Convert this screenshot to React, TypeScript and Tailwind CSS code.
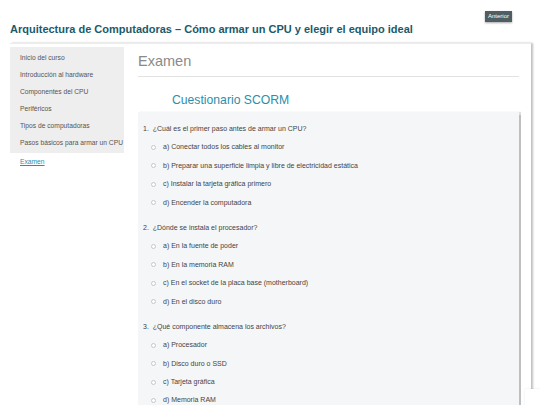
import React from "react";

const nav = [
  "Inicio del curso",
  "Introducción al hardware",
  "Componentes del CPU",
  "Periféricos",
  "Tipos de computadoras",
  "Pasos básicos para armar un CPU",
];

const questions = [
  {
    q: "1.  ¿Cuál es el primer paso antes de armar un CPU?",
    o: [
      "a) Conectar todos los cables al monitor",
      "b) Preparar una superficie limpia y libre de electricidad estática",
      "c) Instalar la tarjeta gráfica primero",
      "d) Encender la computadora",
    ],
  },
  {
    q: "2.  ¿Dónde se instala el procesador?",
    o: [
      "a) En la fuente de poder",
      "b) En la memoria RAM",
      "c) En el socket de la placa base (motherboard)",
      "d) En el disco duro",
    ],
  },
  {
    q: "3.  ¿Qué componente almacena los archivos?",
    o: ["a) Procesador", "b) Disco duro o SSD", "c) Tarjeta gráfica", "d) Memoria RAM"],
  },
];

export default function App() {
  return (
    <div
      className="relative w-[540px] h-[405px] overflow-hidden bg-white"
      style={{ fontFamily: '"Liberation Sans", Arial, sans-serif' }}
    >
      <div className="flex justify-end pt-[11px] pr-[28px]">
        <button className="h-[11px] px-[3px] bg-[#4e5e62] text-white text-[6px] leading-[11px] shadow-[0_1px_2px_rgba(0,0,0,0.35)]">
          Anterior
        </button>
      </div>
      <h1 className="pl-[10px] text-[11px] font-bold leading-[14px] text-[#1b5a6b]">
        Arquitectura de Computadoras – Cómo armar un CPU y elegir el equipo ideal
      </h1>
      <div className="ml-[10px] mt-[7px] w-[521px] h-[400px] bg-white border-t border-[#ececec] shadow-[2px_0_2px_rgba(0,0,0,0.25)] flex pt-[3px]">
        <div className="w-[114px] shrink-0">
          <div className="bg-[#eeeeee] pt-[2px] pb-[2px]">
            {nav.map((n) => (
              <div key={n} className="h-[17px] pl-[10px] text-[6.7px] leading-[17px] text-[#555555] whitespace-nowrap">
                {n}
              </div>
            ))}
          </div>
          <div className="h-[17px] pl-[10px] text-[6.7px] leading-[17px] text-[#2b8fab] underline">
            Examen
          </div>
        </div>
        <div className="flex-1 pl-[14px] pr-[12px]">
          <div className="text-[14.5px] leading-[20px] text-[#8a8a8a] mt-[4px]">Examen</div>
          <div className="mt-[5px] h-px bg-[#e2e2e2]"></div>
          <div className="pl-[34px] mt-[15px] text-[12.2px] leading-[16px] text-[#2b8fab]">
            Cuestionario SCORM
          </div>
          <div className="mt-[4px] bg-[#f4f6f8] shadow-[1.5px_0_1px_rgba(0,0,0,0.25)] pt-[8px] pl-[5px] h-[300px]">
            {questions.map((g, i) => (
              <div key={i} className={i > 0 ? "mt-[7px]" : ""}>
                <div className="h-[18.4px] text-[7px] leading-[18.4px] text-[#444444] whitespace-pre">{g.q}</div>
                {g.o.map((o) => (
                  <div key={o} className="h-[18.4px] flex items-center text-[7px] text-[#444444]">
                    <span className="ml-[8px] w-[5px] h-[5px] rounded-full border border-[#c4c8cc] bg-white"></span>
                    <span className="ml-[7px] leading-[18.4px]">{o}</span>
                  </div>
                ))}
              </div>
            ))}
          </div>
        </div>
      </div>
      <div className="absolute left-[525px] top-[389px] w-[20px] h-[20px] bg-white shadow-[0_0_2px_rgba(0,0,0,0.1)]"></div>
    </div>
  );
}
